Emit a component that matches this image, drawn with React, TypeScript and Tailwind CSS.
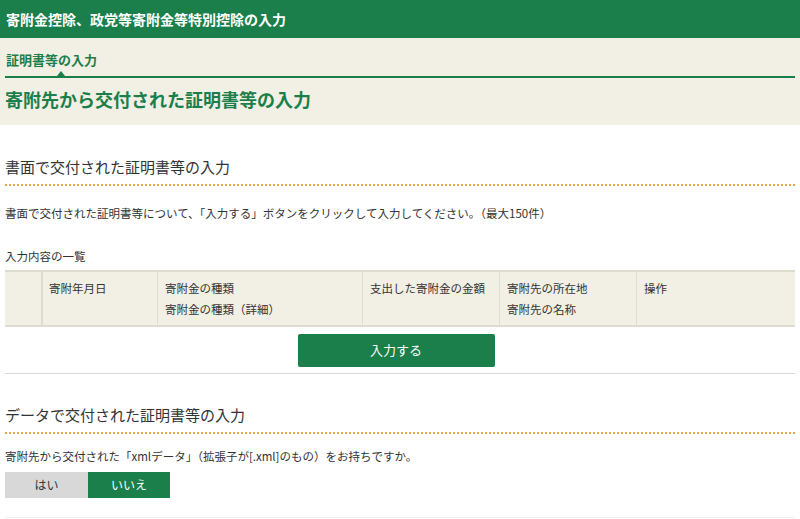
export default function App() {
  const f = { fontFamily: '"Noto Sans CJK JP", "Noto Sans", sans-serif' };
  return (
    <div style={f} className="w-[800px] h-[519px] overflow-hidden bg-white text-[#333]">
      <div className="h-[38px] bg-[#1a7f4b] text-white text-[14px] font-bold flex items-center px-[6px]">寄附金控除、政党等寄附金等特別控除の入力</div>
      <div className="bg-[#f2efe4] h-[87px] px-[5px] pt-[12px]">
        <div className="text-[13px] font-bold text-[#1a7f4b] pl-[1px] h-[20px]">証明書等の入力</div>
        <div className="relative border-b-2 border-[#1a7f4b] mt-[6px]">
          <div className="absolute left-[52px] -top-[5px] w-0 h-0 border-l-[4px] border-r-[4px] border-b-[5px] border-l-transparent border-r-transparent border-b-[#1a7f4b]" />
        </div>
        <div className="text-[18px] font-bold text-[#1a7f4b] mt-[8px]">寄附先から交付された証明書等の入力</div>
      </div>
      <div className="px-[5px]">
        <div className="text-[15px] mt-[31px] h-[22px]">書面で交付された証明書等の入力</div>
        <div className="border-b-2 border-dotted border-[#e0a84a] mt-[6px]" />
        <div className="text-[11.5px] mt-[19px]">書面で交付された証明書等について、「入力する」ボタンをクリックして入力してください。（最大150件）</div>
        <div className="text-[11.5px] mt-[26px]">入力内容の一覧</div>
        <div className="mt-[4px] flex h-[57px] bg-[#f2efe4] border-t-2 border-b-2 border-[#dedbd0] text-[11.5px] leading-[21px]">
          <div className="w-[38px] border-r-2 border-[#dedbd0]" />
          <div className="w-[115px] border-r border-[#dedbd0] px-[6px] pt-[6px]">寄附年月日</div>
          <div className="w-[205px] border-r border-[#dedbd0] px-[7px] pt-[6px]">寄附金の種類<br />寄附金の種類（詳細）</div>
          <div className="w-[137px] border-r border-[#dedbd0] px-[7px] pt-[6px]">支出した寄附金の金額</div>
          <div className="w-[137px] border-r border-[#dedbd0] px-[7px] pt-[6px]">寄附先の所在地<br />寄附先の名称</div>
          <div className="flex-1 px-[7px] pt-[6px]">操作</div>
        </div>
        <div className="flex justify-center mt-[7px]">
          <div className="w-[197px] h-[33px] bg-[#1a7f4b] text-white text-[13px] flex items-center justify-center rounded-[2px] ml-[-8px]">入力する</div>
        </div>
        <div className="border-b border-[#d8d8d8] mt-[6px]" />
        <div className="text-[15px] mt-[30px] h-[22px]">データで交付された証明書等の入力</div>
        <div className="border-b-2 border-dotted border-[#e0a84a] mt-[6px]" />
        <div className="text-[11.5px] mt-[14px]">寄附先から交付された「xmlデータ」（拡張子が[.xml]のもの）をお持ちですか。</div>
        <div className="flex mt-[7px] text-[12px]">
          <div className="w-[83px] h-[26px] bg-[#d8d8d8] flex items-center justify-center">はい</div>
          <div className="w-[82px] h-[26px] bg-[#1a7f4b] text-white flex items-center justify-center">いいえ</div>
        </div>
        <div className="border-b border-[#eee] mt-[19px]" />
      </div>
    </div>
  );
}
